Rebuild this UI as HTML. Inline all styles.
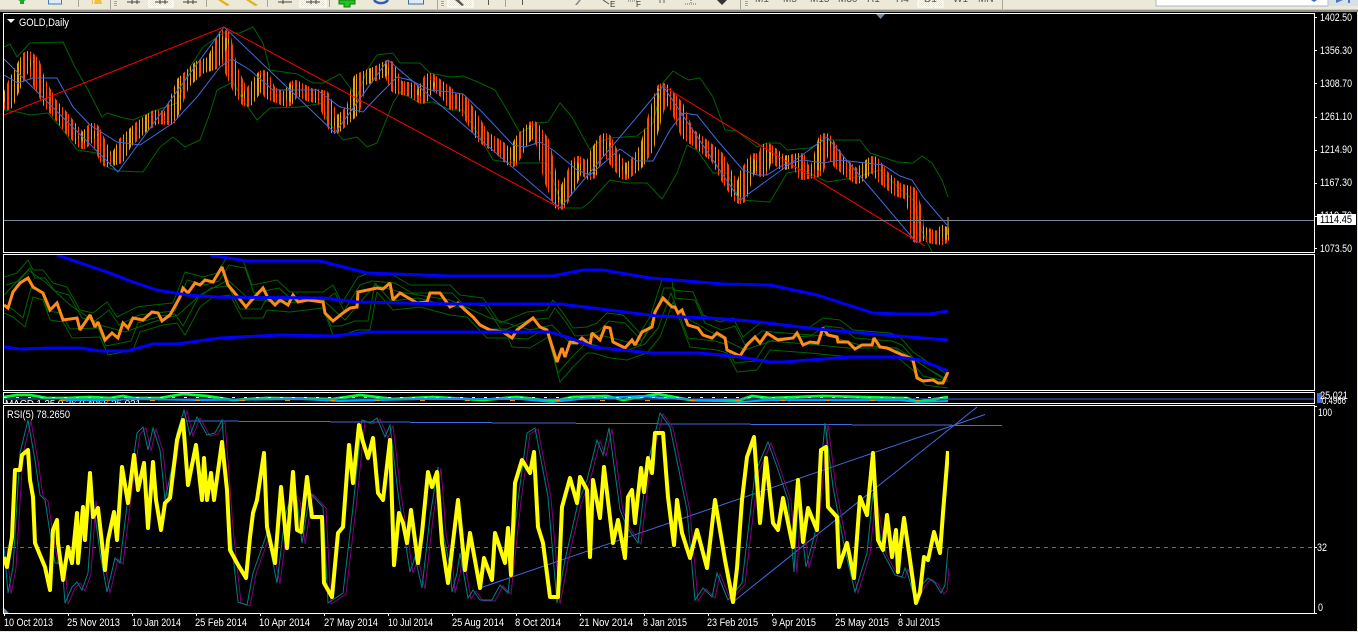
<!DOCTYPE html>
<html lang="en"><head><meta charset="utf-8"><title>GOLD,Daily</title>
<style>
html,body{margin:0;padding:0;width:1358px;height:632px;overflow:hidden;background:#000}
svg{display:block;position:absolute;left:0;top:0}
text{font-family:"Liberation Sans",sans-serif;font-size:11px;fill:#fff}
.l{fill:none;shape-rendering:crispEdges}
.g{fill:none;stroke:#006400;stroke-width:1;stroke-linejoin:round}
.b{fill:none;stroke:#4169e1;stroke-width:1}
.w{fill:none;stroke:#fff;stroke-width:1;shape-rendering:crispEdges}
.t{font-size:10px;fill:#555}
</style></head><body>
<svg width="1358" height="632" viewBox="0 0 1358 632" xmlns="http://www.w3.org/2000/svg">
<defs>
<pattern id="rd" patternUnits="userSpaceOnUse" x="0" y="0" width="16" height="8">
<rect x="1" width="2" height="8" fill="#ff4500"/><rect x="4" width="1" height="8" fill="#ff4500"/><rect x="7" width="2" height="8" fill="#ff4500"/><rect x="11" width="1" height="8" fill="#e8a010"/><rect x="14" width="1" height="8" fill="#ff4500"/>
</pattern>
<pattern id="gd" patternUnits="userSpaceOnUse" x="0" y="0" width="16" height="8">
<rect x="1" width="2" height="8" fill="#e8a010"/><rect x="4" width="1" height="8" fill="#e8a010"/><rect x="7" width="2" height="8" fill="#ff4500"/><rect x="11" width="1" height="8" fill="#e8a010"/><rect x="14" width="1" height="8" fill="#e8a010"/>
</pattern>
<pattern id="dth" patternUnits="userSpaceOnUse" width="2" height="2"><rect width="2" height="2" fill="#fff"/><rect width="1" height="1" fill="#e6e3d4"/><rect x="1" y="1" width="1" height="1" fill="#e6e3d4"/></pattern>
<clipPath id="c1"><rect x="4" y="14" width="945" height="238"/></clipPath>
<clipPath id="c2"><rect x="4" y="255" width="1310" height="135"/></clipPath>
<clipPath id="c3"><rect x="4" y="393" width="1310" height="10"/></clipPath>
<clipPath id="c4"><rect x="4" y="406" width="945" height="207"/></clipPath>
<clipPath id="tb"><rect x="0" y="0" width="1358" height="9"/></clipPath>
</defs>

<!-- toolbar -->
<rect x="0" y="0" width="1358" height="9" fill="#ece9d8"/>
<rect x="0" y="9" width="1358" height="1" fill="#c9c6b6"/>
<rect x="0" y="10" width="1358" height="2" fill="#8f8d84"/>
<g clip-path="url(#tb)">
<g fill="#a7a596">
<rect x="78" y="0" width="1" height="7"/><rect x="206" y="0" width="1" height="7"/><rect x="267" y="0" width="1" height="7"/><rect x="329" y="0" width="1" height="7"/><rect x="110" y="0" width="1" height="9"/><rect x="437" y="0" width="1" height="9"/><rect x="505" y="0" width="1" height="7"/><rect x="740" y="0" width="1" height="9"/><rect x="1002" y="0" width="1" height="9"/>
<rect x="114" y="1" width="3" height="1"/><rect x="114" y="3" width="3" height="1"/><rect x="114" y="5" width="3" height="1"/>
<rect x="441" y="1" width="3" height="1"/><rect x="441" y="3" width="3" height="1"/><rect x="441" y="5" width="3" height="1"/>
<rect x="745" y="1" width="3" height="1"/><rect x="745" y="3" width="3" height="1"/><rect x="745" y="5" width="3" height="1"/>
</g>
<rect x="149" y="-1" width="24" height="8" fill="url(#dth)" stroke="#fff"/>
<rect x="300" y="-1" width="26" height="8" fill="url(#dth)" stroke="#fff"/>
<rect x="448" y="-1" width="25" height="8" fill="url(#dth)" stroke="#fff"/>
<rect x="918" y="-1" width="25" height="8" fill="url(#dth)" stroke="#fff"/>
<path d="M18 0h8l-2 1v3h-4v-3z" fill="#19a82a"/>
<rect x="48.500" y="-2" width="13" height="6" fill="#dfe9f7" stroke="#4a7ab8"/>
<path d="M92 0v4h1V0zM95 0h6l1 4h-8z" fill="#f0c040"/>
<g stroke="#444" fill="none" shape-rendering="crispEdges">
<path d="M127 2h13M132 0v4M137 0v4"/><path d="M155 2h13M160 0v4M165 0v4"/><path d="M183 2h14M188 0v4M193 0v4"/><path d="M278 2h14M283 0v4"/><path d="M306 2h14M311 0v4M316 0v4"/>
</g>
<path d="M218 0h4l8 5-3 1zM246 0h4l8 5-3 1z" fill="#e0b020"/>
<path d="M344 0h6v0h5v4h-5v3h-6v-3h-5v-4z" fill="#22c322" stroke="#0e7a0e"/>
<path d="M374 0a8 6 0 0 0 14 0" fill="none" stroke="#2a62b8" stroke-width="2.500"/>
<rect x="408.500" y="-2" width="15" height="6" fill="#dfe9f7" stroke="#3a6ea8"/>
<path d="M455 0h4l5 5-2 1zM488 0h1v5h-1zM522 0h1v5h-1z" fill="#555"/>
<path d="M575 5l4-5h2l-4 5z" fill="#888"/>
<path d="M603 0l6 4" stroke="#555" fill="none"/>
<text x="610" y="7" font-size="8" style="font-size:8px;fill:#333">E</text>
<path d="M628 1h9" stroke="#666" stroke-dasharray="1 1" fill="none"/>
<text x="636" y="7" style="font-size:8px;fill:#333">F</text>
<path d="M660 0v3M664 0v3" stroke="#666" fill="none"/>
<path d="M685 4h12M691 0v4" stroke="#666" stroke-dasharray="1 1" fill="none"/>
<path d="M717 0h10l-5 5z" fill="#333"/>
<g style="fill:#444">
<text class="t" x="755" y="2">M1</text><text class="t" x="783" y="2">M5</text><text class="t" x="810" y="2">M15</text><text class="t" x="838" y="2">M30</text><text class="t" x="867" y="2">H1</text><text class="t" x="896" y="2">H4</text><text class="t" x="924" y="2">D1</text><text class="t" x="953" y="2">W1</text><text class="t" x="978" y="2">MN</text>
</g>
<rect x="1156" y="-1" width="172" height="7" fill="#fff" stroke="#a5b8cc"/>
<path d="M1311 0h6l-3 2z" fill="#3a6ea8"/>
<rect x="1329" y="-1" width="29" height="7" fill="#d7dfe9"/>
<path d="M1336 3h12v-3h-5zM1336 0h14v3h-14z" fill="#4a7ab8"/>
</g>
<rect x="0" y="631" width="1358" height="1" fill="#ece9d8"/>
<rect x="1357" y="12" width="1" height="620" fill="#ece9d8"/>

<!-- panel frames -->
<rect class="w" x="3.500" y="13.500" width="1311" height="239"/>
<rect class="w" x="3.500" y="254.500" width="1311" height="136"/>
<rect class="w" x="3.500" y="392.500" width="1311" height="11"/>
<rect class="w" x="3.500" y="405.500" width="1311" height="208"/>

<!-- main chart -->
<g clip-path="url(#c1)">
<path class="g" d="M4 47L10 44 17 57 30 43 63 42 75 67 88 90 102 117 107 113 120 117 133 120 157 110 177 103 190 67 203 47 223 33 240 33 253 27 263 43 270 70 297 74 313 83 323 83 340 74 357 97 367 70 377 55 393 53 400 63 420 63 430 73 450 77 463 76 480 83 495 90 507 110 520 133 537 123 548 122 560 103 572 117 590 150 597 143 610 138 637 136 653 123 663 83 673 71 688 80 700 78 713 97 725 130 737 131 757 147 767 143 780 143 787 150 810 148 825 140 860 140 870 153 897 162 913 163 922 156 932 163 942 180 948 197"/>
<path class="g" d="M4 110L17 112 30 115 48 113 63 130 77 150 97 153 107 167 118 171 143 172 160 147 173 137 185 147 200 140 210 113 217 90 233 82 243 100 257 120 270 108 300 107 323 103 327 120 343 140 357 137 367 147 377 143 393 103 400 92 420 103 433 102 450 110 463 110 480 137 493 160 513 163 547 163 552 177 563 208 582 208 590 202 610 180 627 183 647 183 662 199 677 173 687 145 697 150 713 173 727 173 740 200 770 202 787 173 803 170 827 182 853 178 880 170 898 187 913 200 920 227 932 252"/>
<path fill="none" stroke="url(#rd)" stroke-width="14" stroke-linejoin="round" d="M4 100L7 103 15 83 28 58 33 63 38 80 50 103 62 117 72 130 83 142 93 130 107 160 118 157 125 143 140 128 155 117 170 118 183 83 200 67 213 63 224 37 230 67 240 90 247 100 263 77 270 93 287 100 295 87 310 95 323 97 335 127 353 110 360 80 377 73 388 67 397 87 413 90 422 97 430 80 447 93 453 103 460 100 470 115 483 137 500 148 512 160 522 140 533 128 543 143 550 177 560 203 570 183 578 163 590 173 597 153 605 140 613 157 625 173 637 163 647 147 655 117 663 90 677 107 687 133 700 143 717 157 727 177 740 197 747 173 755 160 762 170 767 150 783 163 800 160 803 173 817 170 825 140 840 163 857 177 873 163 883 177 898 190 910 193 916 213 917 236 922 233 933 237 942 238 947 227"/>
<path fill="none" stroke="url(#gd)" stroke-width="14" stroke-linejoin="round" d="M7 103L15 83 28 58M83 142L93 130M112 159L118 157 125 143 140 128 155 117M170 118L183 83 200 67 213 63 224 37M247 100L263 77M287 100L295 87M335 127L353 110 360 80 377 73 388 67M422 97L430 80M512 160L522 140 533 128M560 203L570 183 578 163M590 173L597 153 605 140M625 173L637 163 647 147 655 117 663 90M740 197L747 173 755 160M762 170L767 150M783 163L800 160M817 170L825 140M857 177L873 163M922 233L926 236M942 238L947 227"/>
<path d="M948 217V235" stroke="#daa520" stroke-width="1" fill="none" shape-rendering="crispEdges"/>
<path d="M917 205V243" stroke="#ff4500" stroke-width="1" fill="none" shape-rendering="crispEdges"/>
<path class="b" d="M4 75L18 83 33 78 57 78 73 107 90 125 117 142 140 145 173 123 197 97 220 67 232 59 250 70 273 90 317 90 340 107 363 112 377 97 397 77 410 80 430 90 450 92 463 94 483 113 513 145 525 147 540 142 553 150 577 170 590 175 620 149 637 161 653 161 670 130 683 113 697 115 717 140 743 170 757 175 767 175 783 165 803 160 823 163 840 160 883 165 900 176 912 180 923 197 947 225"/>
<path class="b" d="M4 59L118 172 224 27 335 133 388 60 560 208 663 86 740 200 827 137 917 243"/>
<path d="M4 115L224 27 560 208M663 86L925 246" fill="none" stroke="#f00" stroke-width="1"/>
</g>
<path d="M4 220.500H1314" stroke="#778899" fill="none" shape-rendering="crispEdges"/>
<path d="M876 14h9l-4.500 5z" fill="#778899"/>
<path d="M7 19h8l-4 4z" fill="#fff"/>
<text x="19" y="26" textLength="50" lengthAdjust="spacingAndGlyphs">GOLD,Daily</text>

<!-- price axis -->
<g>
<path class="w" d="M1315 17.500h2M1315 50.500h2M1315 83.500h2M1315 117.500h2M1315 150.500h2M1315 183.500h2M1315 216.500h2M1315 248.500h2M1315 406.500h2M1315 547.500h2M1315 613.500h2"/>
<text x="1320" y="21" textLength="32" lengthAdjust="spacingAndGlyphs">1402.50</text>
<text x="1320" y="54" textLength="32" lengthAdjust="spacingAndGlyphs">1356.30</text>
<text x="1320" y="87" textLength="32" lengthAdjust="spacingAndGlyphs">1308.70</text>
<text x="1320" y="120" textLength="32" lengthAdjust="spacingAndGlyphs">1261.10</text>
<text x="1320" y="153" textLength="32" lengthAdjust="spacingAndGlyphs">1214.90</text>
<text x="1320" y="186" textLength="32" lengthAdjust="spacingAndGlyphs">1167.30</text>
<text x="1320" y="219" textLength="32" lengthAdjust="spacingAndGlyphs">1119.70</text>
<rect x="1317" y="214" width="39" height="11" fill="#fff"/>
<text x="1320" y="223" textLength="32" lengthAdjust="spacingAndGlyphs" style="fill:#000">1114.45</text>
<text x="1320" y="252" textLength="32" lengthAdjust="spacingAndGlyphs">1073.50</text>
<rect x="1317.500" y="393.500" width="4" height="9" fill="#4169e1" stroke="#4169e1"/>
<text x="1320" y="399" textLength="28" lengthAdjust="spacingAndGlyphs">25.021</text>
<text x="1322" y="404" textLength="24" lengthAdjust="spacingAndGlyphs">0.4966</text>
<text x="1318" y="416" textLength="14" lengthAdjust="spacingAndGlyphs">100</text>
<text x="1317" y="551" textLength="10" lengthAdjust="spacingAndGlyphs">32</text>
<text x="1318" y="611" textLength="5" lengthAdjust="spacingAndGlyphs">0</text>
</g>

<!-- second panel -->
<g clip-path="url(#c2)">
<path class="g" d="M4 277L17 273 28 260 33 270 43 270 53 283 67 287 80 310 93 313 107 302 117 317 137 307 153 305 173 303 185 272 203 277 217 273 227 257 243 260 252 285 277 280 290 292 323 292 333 285 342 303 358 277 370 273 393 275 410 285 450 285 460 295 483 298 500 323 527 312 547 310 553 300 563 313 573 328 587 327 597 323 607 313 623 315 640 333 650 317 662 280 672 280 673 290 693 292 703 315 720 322 733 318 743 337 760 323 783 325 810 327 823 318 840 320 853 330 890 333 900 337 913 352 925 360 948 375"/>
<path class="g" transform="translate(2,8)" d="M4 277L17 273 28 260 33 270 43 270 53 283 67 287 80 310 93 313 107 302 117 317 137 307 153 305 173 303 185 272 203 277 217 273 227 257 243 260 252 285 277 280 290 292 323 292 333 285 342 303 358 277 370 273 393 275 410 285 450 285 460 295 483 298 500 323 527 312 547 310 553 300 563 313 573 328 587 327 597 323 607 313 623 315 640 333 650 317 662 280 672 280 673 290 693 292 703 315 720 322 733 318 743 337 760 323 783 325 810 327 823 318 840 320 853 330 890 333 900 337 913 352 925 360 946 372"/>
<path class="g" d="M4 313L13 317 25 327 33 297 43 300 50 320 63 322 72 338 100 337 108 355 133 350 140 332 163 325 177 323 185 335 200 307 213 297 230 295 242 318 263 318 267 310 290 312 323 308 333 335 343 335 357 330 370 330 377 292 393 310 420 307 450 315 467 317 487 338 508 338 512 347 530 348 548 337 560 382 573 367 587 353 593 353 610 358 627 360 647 353 660 337 673 302 690 347 717 350 727 353 737 372 757 370 770 350 810 353 850 357 897 357 915 372 925 385 948 388"/>
<path class="g" transform="translate(-2,-9)" d="M4 313L13 317 25 327 33 297 43 300 50 320 63 322 72 338 100 337 108 355 133 350 140 332 163 325 177 323 185 335 200 307 213 297 230 295 242 318 263 318 267 310 290 312 323 308 333 335 343 335 357 330 370 330 377 292 393 310 420 307 450 315 467 317 487 338 508 338 512 347 530 348 548 337 560 382 573 367 587 353 593 353 610 358 627 360 647 353 660 337 673 302 690 347 717 350 727 353 737 372 757 370 770 350 810 353 850 357 897 357 915 372 925 385 948 390"/>
<path class="g" d="M4 295L28 270 45 282 70 305 100 325 125 332 153 322 178 315 200 295 228 280 250 300 290 300 323 300 345 320 375 285 400 292 450 300 490 318 530 330 552 325 572 345 600 335 640 345 662 300 690 320 725 340 745 350 780 338 825 335 860 345 897 348 915 360 948 382"/>
<path fill="none" stroke="#ff8c1a" stroke-width="3" stroke-linejoin="miter" stroke-miterlimit="2" d="M4 305L8 308 13 292 20 283 28 278 33 287 43 293 50 310 57 303 63 320 77 318 80 330 90 315 95 327 98 322 105 340 112 333 118 338 123 323 128 328 133 318 143 320 152 312 158 313 162 321 170 315 180 297 183 288 188 293 195 283 200 285 205 280 213 282 222 267 228 285 238 297 246 307 250 302 263 288 268 298 275 305 280 300 288 305 293 295 298 302 308 300 323 302 325 313 333 321 343 313 350 308 357 307 358 292 377 288 383 289 390 283 393 300 400 293 417 303 427 302 430 293 440 293 450 307 458 303 465 310 473 317 480 325 490 330 503 332 512 338 517 330 533 318 540 327 547 330 557 362 562 348 565 357 570 342 577 343 582 338 590 345 592 333 600 340 605 327 610 328 613 342 625 348 632 340 635 345 642 332 652 327 655 312 663 298 672 307 675 307 678 313 682 310 688 325 698 328 703 335 712 338 717 333 725 338 727 350 740 356 747 345 755 337 760 343 767 333 778 340 793 338 797 333 803 345 810 342 818 343 823 328 828 335 837 337 838 342 848 342 855 349 862 345 872 345 874 338 880 347 887 348 898 353 910 358 913 360 917 378 923 381 933 380 938 383 943 383 948 372"/>
<g fill="none" stroke="#00f" stroke-width="3" stroke-linejoin="round">
<path d="M57 255L107 272 133 282 157 290 187 295 217 297 323 298 357 302 450 304 560 304 617 311 657 316 710 318 750 321 817 329 850 332 897 336 948 340"/>
<path d="M210 255L247 261 320 261 367 273 450 276 553 276 583 270 603 270 650 278 723 284 770 285 817 295 873 313 900 314 930 314 948 311"/>
<path d="M4 347L20 349 53 348 80 348 100 351 127 351 153 344 177 344 220 338 280 335 333 336 370 332 450 332 550 332 570 338 593 347 650 353 700 353 740 357 770 362 783 362 850 357 897 357 920 360 948 371"/>
</g>
</g>

<!-- third panel -->
<g clip-path="url(#c3)">
<text x="5" y="407" textLength="136" lengthAdjust="spacing" style="font-size:10px">MACD 1.25 0.26 0.4966 25.021</text>
<path d="M4 397L17 395 30 395 47 398 67 398 90 397 110 398 123 396 133 398 160 398 183 394 207 396 233 400 267 398 333 399 360 395 393 399 433 397 450 398 483 400 517 397 553 401 573 397 607 396 623 400 658 394 690 400 737 401 752 396 770 398 823 396 900 398 907 398 917 402 948 397" fill="none" stroke="#00ff2a" stroke-width="2.800"/>
<path d="M60 400L110 400 130 399 200 400 300 399 340 401 420 399 520 399 552 402 580 399 640 396 680 399 740 402 770 400 900 400 917 402 948 401" fill="none" stroke="#00aaff" stroke-width="2"/>
<path d="M4 399H1314" fill="none" stroke="#4169e1" stroke-width="1" shape-rendering="crispEdges"/>
<path d="M4 397.500H948" fill="none" stroke="#f5f5d0" stroke-width="1" stroke-dasharray="3 9" shape-rendering="crispEdges"/>
<path d="M60 400.500H948" fill="none" stroke="#ff8c00" stroke-width="1" stroke-dasharray="5 40" shape-rendering="crispEdges"/>
</g>

<!-- RSI panel -->
<path d="M4 547.500H1314" fill="none" stroke="#4169e1" stroke-dasharray="4 4" shape-rendering="crispEdges"/>
<path d="M187 421L290 421.500 450 422.500 700 424 1002 425.500" class="l" stroke="#4169e1"/>
<path class="b" d="M480 588L985 414.500M733 602L977 407"/>
<g clip-path="url(#c4)">
<path fill="none" stroke="#800080" stroke-width="1" transform="translate(3,1)" d="M4 547L8 593 13 567 20 453 28 420 35 460 40 495 45 500 50 533 55 563 62 563 65 603 72 587 77 582 82 590 88 573 93 500 100 553 107 592 115 558 120 563 128 497 137 433 143 427 148 450 153 428 160 450 165 500 173 463 177 433 184 410 190 435 197 417 207 435 215 433 222 420 230 527 238 602 247 605 253 573 267 533 277 583 285 517 292 493 297 500 302 543 310 493 323 507 328 603 343 593 353 507 362 420 370 423 377 418 385 437 390 425 398 493 410 572 415 557 422 588 430 517 438 467 443 533 450 567 452 592 457 573 460 553 468 598 473 590 480 600 492 600 500 585 508 593 518 500 527 433 535 428 548 497 557 603 565 560 578 503 587 480 597 440 603 455 609 428 620 510 627 527 638 543 647 467 660 413 670 427 687 510 695 600 703 588 712 597 717 573 728 600 742 583 755 473 768 442 778 470 788 500 794 572 798 500 806 567 815 533 825 423 833 487 845 550 855 592 867 553 873 493 883 553 895 575 902 577 905 568 908 575 915 600 922 585 928 578 935 583 941 593 944 590 946 567"/>
<path fill="none" stroke="#008080" stroke-width="1" d="M4 547L8 593 13 567 20 453 28 420 35 460 40 495 45 500 50 533 55 563 62 563 65 603 72 587 77 582 82 590 88 573 93 500 100 553 107 592 115 558 120 563 128 497 137 433 143 427 148 450 153 428 160 450 165 500 173 463 177 433 184 410 190 435 197 417 207 435 215 433 222 420 230 527 238 602 247 605 253 573 267 533 277 583 285 517 292 493 297 500 302 543 310 493 323 507 328 603 343 593 353 507 362 420 370 423 377 418 385 437 390 425 398 493 410 572 415 557 422 588 430 517 438 467 443 533 450 567 452 592 457 573 460 553 468 598 473 590 480 600 492 600 500 585 508 593 518 500 527 433 535 428 548 497 557 603 565 560 578 503 587 480 597 440 603 455 609 428 620 510 627 527 638 543 647 467 660 413 670 427 687 510 695 600 703 588 712 597 717 573 728 600 742 583 755 473 768 442 778 470 788 500 794 572 798 500 806 567 815 533 825 423 833 487 845 550 855 592 867 553 873 493 883 553 895 575 902 577 905 568 908 575 915 600 922 585 928 578 935 583 941 593 945 585 948 548"/>
<path fill="none" stroke="#ff0" stroke-width="4" stroke-linejoin="round" d="M4 557L7 567 12 537 15 470 20 470 22 455 28 450 30 480 33 497 35 543 45 567 50 590 53 530 57 520 58 543 63 580 68 547 72 563 77 513 78 563 83 507 85 540 90 473 93 517 98 508 105 570 108 540 114 512 117 540 122 467 128 503 134 455 138 490 144 463 148 528 153 462 156 500 161 530 165 503 170 498 177 440 183 420 188 485 196 445 202 500 204 458 207 500 211 473 214 500 222 442 227 490 230 550 237 563 246 578 250 537 253 513 257 500 264 453 267 527 275 563 281 487 287 548 293 472 297 530 301 532 307 477 312 517 322 517 324 583 332 597 338 533 343 527 349 445 353 483 359 425 363 442 368 458 373 438 378 493 383 500 390 440 394 565 399 513 403 523 407 543 411 510 418 563 422 533 428 472 432 487 437 472 442 543 448 583 450 567 458 500 465 570 470 533 480 588 484 558 492 580 495 533 505 563 508 528 511 575 515 483 522 460 530 473 534 452 538 527 543 543 550 597 558 597 562 507 570 478 577 503 580 477 587 490 590 557 593 480 600 518 604 467 613 543 618 520 625 558 628 497 632 490 635 523 641 468 644 492 648 458 652 473 655 433 663 433 668 497 674 545 677 500 682 533 690 558 697 530 707 568 715 500 725 560 733 602 737 568 742 500 747 457 754 437 760 523 766 458 773 523 778 530 783 498 793 547 798 480 803 542 808 508 817 530 821 450 826 447 828 507 837 517 839 567 847 543 854 578 860 497 867 515 873 453 878 540 883 550 887 515 892 557 896 530 898 572 900 550 904 518 910 560 916 603 920 592 924 557 928 560 934 532 940 553 943 513 948 451"/>
</g>
<path d="M4 613v-5l5 5z" fill="#778899"/>
<text x="7" y="418" textLength="63" lengthAdjust="spacingAndGlyphs">RSI(5) 78.2650</text>

<!-- time axis -->
<path class="w" d="M4.500 613v3M68.500 613v3M132.500 613v3M196.500 613v3M260.500 613v3M324.500 613v3M388.500 613v3M452.500 613v3M516.500 613v3M580.500 613v3M644.500 613v3M708.500 613v3M772.500 613v3M836.500 613v3M900.500 613v3"/>
<text x="4" y="626" textLength="49" lengthAdjust="spacingAndGlyphs">10 Oct 2013</text>
<text x="67" y="626" textLength="53" lengthAdjust="spacingAndGlyphs">25 Nov 2013</text>
<text x="132" y="626" textLength="49" lengthAdjust="spacingAndGlyphs">10 Jan 2014</text>
<text x="195" y="626" textLength="52" lengthAdjust="spacingAndGlyphs">25 Feb 2014</text>
<text x="259" y="626" textLength="51" lengthAdjust="spacingAndGlyphs">10 Apr 2014</text>
<text x="324" y="626" textLength="54" lengthAdjust="spacingAndGlyphs">27 May 2014</text>
<text x="388" y="626" textLength="45" lengthAdjust="spacingAndGlyphs">10 Jul 2014</text>
<text x="452" y="626" textLength="52" lengthAdjust="spacingAndGlyphs">25 Aug 2014</text>
<text x="515" y="626" textLength="46" lengthAdjust="spacingAndGlyphs">8 Oct 2014</text>
<text x="579" y="626" textLength="54" lengthAdjust="spacingAndGlyphs">21 Nov 2014</text>
<text x="643" y="626" textLength="44" lengthAdjust="spacingAndGlyphs">8 Jan 2015</text>
<text x="707" y="626" textLength="51" lengthAdjust="spacingAndGlyphs">23 Feb 2015</text>
<text x="772" y="626" textLength="44" lengthAdjust="spacingAndGlyphs">9 Apr 2015</text>
<text x="835" y="626" textLength="54" lengthAdjust="spacingAndGlyphs">25 May 2015</text>
<text x="898" y="626" textLength="42" lengthAdjust="spacingAndGlyphs">8 Jul 2015</text>
</svg>
</body></html>
